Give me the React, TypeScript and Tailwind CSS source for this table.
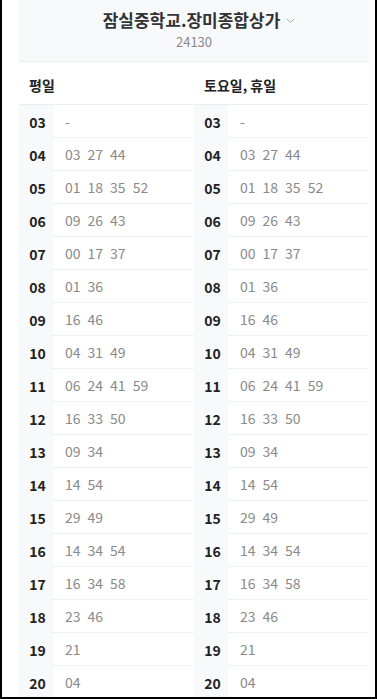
const rows: [string, string[]][] = [
  ["03", []],
  ["04", ["03", "27", "44"]],
  ["05", ["01", "18", "35", "52"]],
  ["06", ["09", "26", "43"]],
  ["07", ["00", "17", "37"]],
  ["08", ["01", "36"]],
  ["09", ["16", "46"]],
  ["10", ["04", "31", "49"]],
  ["11", ["06", "24", "41", "59"]],
  ["12", ["16", "33", "50"]],
  ["13", ["09", "34"]],
  ["14", ["14", "54"]],
  ["15", ["29", "49"]],
  ["16", ["14", "34", "54"]],
  ["17", ["16", "34", "58"]],
  ["18", ["23", "46"]],
  ["19", ["21"]],
  ["20", ["04"]],
];

const Cell = ({ hour, mins }: { hour: string; mins: string[] }) => (
  <div className="flex h-[33px]">
    <div className="w-[34px] bg-[#f8f9fb] flex items-center justify-center pl-[3px] pt-[1px] text-[14px] font-bold text-[#222]">
      {hour}
    </div>
    <div className="flex-1 flex items-center gap-[7px] pl-[12px] pt-[1px] border-b border-[#f0f1f3] text-[14px] text-[#8a8a8a]">
      {mins.length === 0 ? <span>-</span> : mins.map((m) => <span key={m}>{m}</span>)}
    </div>
  </div>
);

export default function App() {
  return (
    <div
      className="w-[377px] h-[699px] overflow-hidden bg-white border-l-2 border-r-2 border-b-2 border-black"
      style={{ fontFamily: '"Noto Sans CJK KR", "Noto Sans", sans-serif' }}
    >
      <div className="ml-[17px] w-[350px]">
        {/* 정류장 이름 */}
        <div className="h-[62px] bg-[#f8f9fb] border-b border-[#eceef1] flex flex-col items-center pt-[7px]">
          <div className="flex items-center gap-[6px] pl-[10px]">
            <span className="text-[17px] leading-[26px] font-bold text-[#333]">잠실중학교.장미종합상가</span>
            <svg width="9" height="6" viewBox="0 0 9 6" className="mt-[2px]">
              <path d="M1 1l3.5 3.5L8 1" fill="none" stroke="#aaa" strokeWidth="1" />
            </svg>
          </div>
          <span className="text-[13px] leading-[18px] text-[#888]">24130</span>
        </div>
        <div className="grid grid-cols-2 h-[43px] pt-[4px] border-b border-[#eceef1] items-center text-[14px] font-bold text-[#222]">
          <span className="pl-[10px]">평일</span>
          <span className="pl-[10px]">토요일, 휴일</span>
        </div>
        <div className="grid grid-cols-2">
          {rows.map(([h, m]) => [
            <Cell key={h + "a"} hour={h} mins={m} />,
            <Cell key={h + "b"} hour={h} mins={m} />,
          ])}
        </div>
      </div>
    </div>
  );
}
